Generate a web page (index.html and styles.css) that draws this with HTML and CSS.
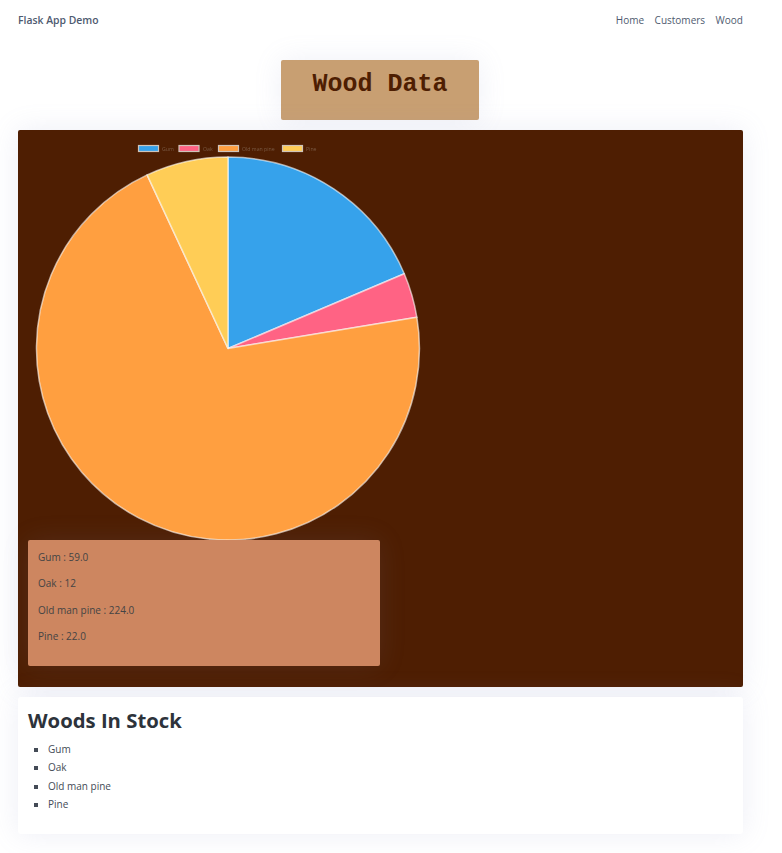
FILE: index.html
```html
<!DOCTYPE html>
<html lang="en">
<head>
    <meta charset="UTF-8">
    <meta name="viewport" content="width=device-width, initial-scale=1.0">
    <title>Flask App Demo</title>
    <link rel="stylesheet" href="styles.css">
</head>
<body>

    <nav class="navbar">
        <a class="brand" href="#">Flask App Demo</a>
        <div class="nav-links">
            <a href="#">Home</a>
            <a href="#">Customers</a>
            <a href="#">Wood</a>
        </div>
    </nav>

    <main class="content">
        <h1 class="page-title">Wood Data</h1>

        <section class="chart-panel">
            <svg class="pie-chart" width="400" height="400" viewBox="0 0 400 400">
                <g class="legend">
                    <rect x="110.500" y="5.500" width="20" height="6" fill="#36a2eb"/>
                    <text x="134" y="10.500">Gum</text>
                    <rect x="151" y="5.500" width="20" height="6" fill="#ff6384"/>
                    <text x="175" y="10.500">Oak</text>
                    <rect x="190.500" y="5.500" width="20" height="6" fill="#ff9f40"/>
                    <text x="214" y="10.500">Old man pine</text>
                    <rect x="254.500" y="5.500" width="20" height="6" fill="#ffcd56"/>
                    <text x="278" y="10.500">Pine</text>
                </g>
                <g class="slices">
                    <path d="M200 208.500 L200 17 A191.500 191.500 0 0 1 376.300 133.700 Z" fill="#36a2eb"/>
                    <path d="M200 208.500 L376.300 133.700 A191.500 191.500 0 0 1 388.900 177.300 Z" fill="#ff6384"/>
                    <path d="M200 208.500 L388.900 177.300 A191.500 191.500 0 1 1 119.100 34.900 Z" fill="#ff9f40"/>
                    <path d="M200 208.500 L119.100 34.900 A191.500 191.500 0 0 1 200 17 Z" fill="#ffcd56"/>
                </g>
            </svg>

            <div class="stock-values">
                <p>Gum : 59.0</p>
                <p>Oak : 12</p>
                <p>Old man pine : 224.0</p>
                <p>Pine : 22.0</p>
            </div>
        </section>

        <section class="stock-card">
            <h2>Woods In Stock</h2>
            <ul>
                <li>Gum</li>
                <li>Oak</li>
                <li>Old man pine</li>
                <li>Pine</li>
            </ul>
        </section>
    </main>

</body>
</html>
```

FILE: styles.css
```css
body {
    margin: 0;
    background-color: #fff;
    font-family: "Open Sans", "Noto Sans", sans-serif;
    color: #444b56;
}

.navbar {
    display: flex;
    justify-content: space-between;
    align-items: center;
    height: 40px;
    padding: 0 39px 0 18px;
}

.navbar a {
    font-size: 10px;
    color: #4e5a70;
    text-decoration: none;
}

.navbar .brand {
    font-size: 10.400px;
    font-weight: 600;
}

.nav-links {
    display: flex;
    gap: 10.500px;
}

.content {
    display: flex;
    flex-direction: column;
    align-items: flex-start;
    gap: 10px;
    width: 725px;
    margin-left: 18px;
    padding: 20px 0 19px;
}

.page-title {
    box-sizing: border-box;
    width: 198px;
    height: 60px;
    margin: 0 0 0 263px;
    padding-top: 9px;
    background-color: #c89f72;
    border-radius: 2px;
    box-shadow: 0 0 28px rgba(140, 150, 200, 0.14);
    font-family: "Liberation Mono", monospace;
    font-size: 25px;
    font-weight: bold;
    line-height: 32px;
    text-align: center;
    color: #4e1e02;
}

.chart-panel {
    box-sizing: border-box;
    width: 100%;
    height: 557px;
    padding: 10px;
    background-color: #4e1e02;
    border-radius: 2px;
    box-shadow: 0 0 28px rgba(140, 150, 200, 0.16);
}

.pie-chart {
    display: block;
    filter: blur(0.5px);
}

.legend rect {
    stroke: #cfc4ba;
    stroke-width: 1.200;
}

.legend text {
    font-size: 5.200px;
    fill: #7a5a44;
}

.slices path {
    stroke: #fff;
    stroke-opacity: 0.6;
    stroke-width: 1.500;
    stroke-linejoin: round;
}

.stock-values {
    box-sizing: border-box;
    width: 352px;
    height: 126px;
    padding: 10px;
    background-color: #cd8660;
    border-radius: 2px;
    box-shadow: 0 0 28px rgba(140, 150, 200, 0.12);
    font-size: 10px;
    line-height: 14px;
    color: #444;
}

.stock-values p {
    margin: 0 0 12.300px;
}

.stock-card {
    box-sizing: border-box;
    width: 100%;
    height: 137px;
    padding: 9px 10px;
    background-color: #fff;
    border-radius: 3px;
    box-shadow: 0 0 28px rgba(140, 150, 200, 0.16);
}

.stock-card h2 {
    margin: 0 0 6px;
    font-size: 20.300px;
    line-height: 28px;
    font-weight: 700;
    color: #2d333b;
}

.stock-card ul {
    margin: 0;
    padding-left: 20px;
    list-style-type: square;
    font-size: 10px;
    line-height: 18.400px;
}
```
